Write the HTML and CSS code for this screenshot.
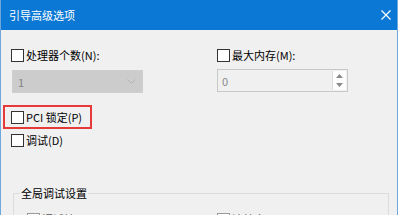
FILE: index.html
```html
<!DOCTYPE html>
<html lang="zh-CN">
<head>
<meta charset="UTF-8">
<title>引导高级选项</title>
<link rel="stylesheet" href="styles.css">
</head>
<body>

<div class="window">

<div class="titlebar">
<span class="title">引导高级选项</span>
<svg class="close" width="10" height="10" viewBox="0 0 10 10">
<path d="M0.5 0.5 L9.5 9.5 M9.5 0.5 L0.5 9.5" stroke="#fff" stroke-width="1.2" fill="none"/>
</svg>
</div>

<div class="content">

<div class="cols">
<div class="col left">
<label class="chk"><span class="box"></span>处理器个数(N):</label>
<div class="combo">
<span>1</span>
<svg width="9" height="5" viewBox="0 0 9 5"><path d="M0.5 0.5 L4.5 4.5 L8.5 0.5" stroke="#b5b5b5" fill="none"/></svg>
</div>
</div>
<div class="col right">
<label class="chk"><span class="box"></span>最大内存(M):</label>
<div class="spin">
<span class="val">0</span>
<div class="btns">
<svg width="7" height="4" viewBox="0 0 7 4"><path d="M0 4 L3.5 0 L7 4 Z" fill="#8a8a8a"/></svg>
<svg width="7" height="4" viewBox="0 0 7 4"><path d="M0 0 L3.5 4 L7 0 Z" fill="#8a8a8a"/></svg>
</div>
</div>
</div>
</div>

<label class="chk pci"><span class="box"></span>PCI 锁定(P)</label>
<label class="chk debug"><span class="box"></span>调试(D)</label>

<fieldset class="group">
<legend>全局调试设置</legend>
<div class="cols">
<label class="chk sub"><span class="box"></span>调试端口(U):</label>
<label class="chk sub2"><span class="box"></span>波特率(B):</label>
</div>
</fieldset>

</div>

</div>

</body>
</html>
```

FILE: styles.css
```css
body{
margin:0;
background:#fff;
font-family:"Noto Sans CJK SC","Liberation Sans",sans-serif;
font-size:11px;
color:#000;
}

.window{
width:396px;
height:215px;
background:#f0f0f0;
border-left:1px solid #6fa6dc;
border-right:1px solid #6fa6dc;
overflow:hidden;
}

.titlebar{
height:30px;
background:#0a78d4;
display:flex;
align-items:center;
justify-content:space-between;
padding:0 7px 0 8px;
color:#fff;
}

.title{
font-size:11px;
}

.close{
margin-right:-1px;
}

.content{
padding:19px 0 0 10px;
}

.cols{
display:flex;
}

.col{
flex:none;
}

.left{
width:206px;
}

.right{
width:134px;
}

.chk{
display:flex;
align-items:center;
height:13px;
line-height:13px;
white-space:nowrap;
}

.box{
width:11px;
height:11px;
border:1px solid #333;
background:#fff;
margin-right:2px;
flex:none;
}

.combo{
margin:8px 0 0 1px;
width:118px;
height:21px;
border:1px solid #cfcfcf;
background:#cccccc;
display:flex;
align-items:center;
justify-content:space-between;
padding:0 6px 0 5px;
color:#838383;
}

.spin{
margin-top:7px;
width:129px;
height:21px;
border:1px solid #c8c8c8;
background:#f0f0f0;
display:flex;
align-items:center;
color:#8a8a8a;
}

.spin .val{
flex:1;
padding-left:4px;
}

.btns{
width:13px;
height:19px;
margin-right:1px;
background:#fdfdfd;
border-left:1px solid #dcdcdc;
display:flex;
flex-direction:column;
align-items:center;
justify-content:space-around;
}

.pci{
position:relative;
margin-top:18px;
}

.pci::after{
content:"";
position:absolute;
left:-8px;
top:-6px;
width:85px;
height:20px;
border:2px solid #e5393a;
}

.debug{
margin-top:10px;
}

.group{
margin:38px 0 0 2px;
width:376px;
border:1px solid #dcdcdc;
padding:12px 0 0 13px;
height:40px;
box-sizing:border-box;
}

.group legend{
padding:0 1px;
margin-left:-7px;
font-size:11px;
}

.group .sub{
width:190px;
}

.group .sub .box,
.group .sub2 .box{
border-color:#9a9a9a;
}

.group .sub,
.group .sub2{
color:#555;
}
```
